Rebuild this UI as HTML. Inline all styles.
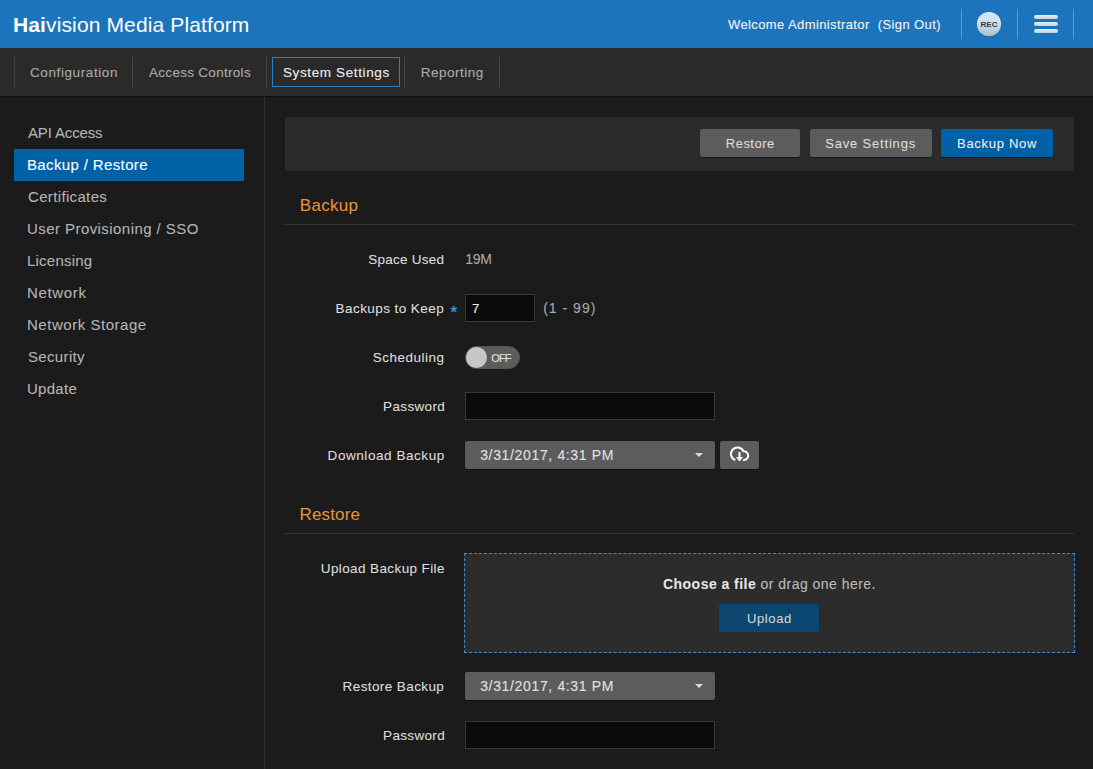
<!DOCTYPE html>
<html><head><meta charset="utf-8"><style>
*{box-sizing:border-box;margin:0;padding:0}
html,body{width:1093px;height:769px;overflow:hidden;background:#1b1b1b;font-family:"Liberation Sans",sans-serif;}
.t{position:absolute;white-space:nowrap;line-height:normal}
.box{position:absolute}
#hdr{left:0;top:0;width:1093px;height:48px;background:#1c75bc}
.vsep{position:absolute;width:1px;background:#5a9bd0;top:9px;height:30px}
#nav{left:0;top:48px;width:1093px;height:48px;background:#2a2a2a;box-shadow:0 1px 1px rgba(0,0,0,.45)}
.nsep{position:absolute;top:57px;height:30px;width:1px;background:#444}
#sysbox{left:272px;top:57px;width:128px;height:30px;border:1px solid #2a7fc9}
#side{left:264px;top:97px;width:1px;height:672px;background:#333}
#act{left:14px;top:149px;width:230px;height:32px;background:#0061a7}
#tool{left:285px;top:117px;width:789px;height:54px;background:#2b2b2b}
.btn{position:absolute;top:129px;height:28px;background:#5c5c5c;border-radius:2px;box-shadow:0 1px 1px rgba(0,0,0,.4)}
.hl{position:absolute;left:285px;width:789px;height:1px;background:#333}
.inp{position:absolute;left:465px;background:#0b0b0b;border:1px solid #3a3a3a}
.sel{position:absolute;left:465px;width:250px;height:28px;background:#5c5c5c;border-radius:2px;box-shadow:0 1px 1px rgba(0,0,0,.4)}
.caret{position:absolute;left:695px;width:0;height:0;border-left:4px solid transparent;border-right:4px solid transparent;border-top:4px solid #ddd}
#rec{left:977px;top:12px;width:24px;height:24px;border-radius:50%;background:linear-gradient(#d8e6f2 0%,#d0dfec 45%,#aebdca 100%);box-shadow:inset 0 0 1px rgba(255,255,255,.6)}
.hb{position:absolute;left:1034px;width:23.5px;height:4px;border-radius:2px;background:linear-gradient(#e8f0f7,#c2d2df)}
#tog{left:465px;top:346px;width:55px;height:23px;border-radius:12px;background:#5c5c5c;border:1px solid #555}
#knob{left:465.5px;top:347px;width:21px;height:21px;border-radius:50%;background:#c6c6c6}
#cbtn{left:720px;top:441px;width:39px;height:28px;background:#5c5c5c;border-radius:2px;box-shadow:0 1px 1px rgba(0,0,0,.4)}
#up{left:464px;top:553px;width:611px;height:100px;background:#2c2c2c;border:1px dashed #3a8fd9}
#upbtn{left:719px;top:604px;width:100px;height:28px;background:#0b4770;border-radius:2px}
</style></head><body>

<div id="hdr" class="box"></div>
<div class="vsep" style="left:961px"></div>
<div class="vsep" style="left:1017px"></div>
<div class="vsep" style="left:1073px"></div>
<div id="rec" class="box"></div>
<div class="hb" style="top:15px"></div>
<div class="hb" style="top:22px"></div>
<div class="hb" style="top:29px"></div>
<div id="nav" class="box"></div>
<div class="nsep" style="left:14px"></div>
<div class="nsep" style="left:132px"></div>
<div class="nsep" style="left:266px"></div>
<div class="nsep" style="left:404px"></div>
<div class="nsep" style="left:499px"></div>
<div id="sysbox" class="box"></div>
<div id="side" class="box"></div>
<div id="act" class="box"></div>
<div id="tool" class="box"></div>
<div class="btn" style="left:700px;width:100px"></div>
<div class="btn" style="left:810px;width:122px"></div>
<div class="btn" style="left:941px;width:112px;background:#0061a7"></div>
<div class="hl" style="top:224px"></div>
<div class="inp" style="top:294px;width:70px;height:28px"></div>
<div id="tog" class="box"></div><div id="knob" class="box"></div>
<div class="inp" style="top:392px;width:250px;height:28px"></div>
<div class="sel" style="top:441px"></div><i class="caret" style="top:453px"></i>
<div id="cbtn" class="box"><svg width="39" height="28" viewBox="0 0 39 28"><path d="M15.28 19.11 A6.5 6.5 0 1 1 23.37 10.22 A4.4 4.4 0 1 1 23.04 18.93" fill="none" stroke="#fff" stroke-width="2"/><path d="M19.5 11 V17" stroke="#fff" stroke-width="2"/><path d="M16 16 L23 16 L19.5 20.5 Z" fill="#fff"/></svg></div>
<div class="hl" style="top:533px"></div>
<div id="up" class="box"></div>
<div id="upbtn" class="box"></div>
<div class="sel" style="top:672px"></div><i class="caret" style="top:684px"></i>
<div class="inp" style="top:721px;width:250px;height:28px"></div>

<div id="logo" class="t" style="left:13px;top:13px;font-size:21px;letter-spacing:0.127px;color:#fff"><b>Hai</b>vision Media Platform</div>
<div id="welcome" class="t" style="left:728px;top:17px;font-size:13px;letter-spacing:0.394px;color:#f0f4f8;-webkit-text-stroke:0.1px #f0f4f8">Welcome Administrator&nbsp;&nbsp;(Sign Out)</div>
<div id="rectxt" class="t" style="left:977px;top:19.5px;font-size:8px;letter-spacing:0.1px;color:#333d47;font-weight:bold;width:24px;text-align:center">REC</div>
<div id="tab1" class="t" style="left:30px;top:65px;font-size:13.5px;letter-spacing:0.599px;color:#aaa;-webkit-text-stroke:0.1px #aaa">Configuration</div>
<div id="tab2" class="t" style="left:149px;top:65px;font-size:13.5px;letter-spacing:0.294px;color:#aaa;-webkit-text-stroke:0.1px #aaa">Access Controls</div>
<div id="tab3" class="t" style="left:283px;top:65px;font-size:13.5px;letter-spacing:0.619px;color:#eee;-webkit-text-stroke:0.1px #eee">System Settings</div>
<div id="tab4" class="t" style="left:420.7px;top:65px;font-size:13.5px;letter-spacing:0.5px;color:#aaa;-webkit-text-stroke:0.1px #aaa">Reporting</div>
<div id="side0" class="t" style="left:28px;top:124px;font-size:15px;letter-spacing:-0.144px;color:#b4b4b4;-webkit-text-stroke:0.1px #b4b4b4">API Access</div>
<div id="side1" class="t" style="left:27px;top:156px;font-size:15px;letter-spacing:0.367px;color:#fff;-webkit-text-stroke:0.1px #fff">Backup / Restore</div>
<div id="side2" class="t" style="left:28px;top:188px;font-size:15px;letter-spacing:0.345px;color:#b4b4b4;-webkit-text-stroke:0.1px #b4b4b4">Certificates</div>
<div id="side3" class="t" style="left:27px;top:220px;font-size:15px;letter-spacing:0.436px;color:#b4b4b4;-webkit-text-stroke:0.1px #b4b4b4">User Provisioning / SSO</div>
<div id="side4" class="t" style="left:27px;top:252px;font-size:15px;letter-spacing:0.217px;color:#b4b4b4;-webkit-text-stroke:0.1px #b4b4b4">Licensing</div>
<div id="side5" class="t" style="left:27px;top:284px;font-size:15px;letter-spacing:0.648px;color:#b4b4b4;-webkit-text-stroke:0.1px #b4b4b4">Network</div>
<div id="side6" class="t" style="left:27px;top:316px;font-size:15px;letter-spacing:0.53px;color:#b4b4b4;-webkit-text-stroke:0.1px #b4b4b4">Network Storage</div>
<div id="side7" class="t" style="left:28px;top:348px;font-size:15px;letter-spacing:0.342px;color:#b4b4b4;-webkit-text-stroke:0.1px #b4b4b4">Security</div>
<div id="side8" class="t" style="left:27px;top:380px;font-size:15px;letter-spacing:0.28px;color:#b4b4b4;-webkit-text-stroke:0.1px #b4b4b4">Update</div>
<div id="btn1" class="t" style="left:725.8px;top:136px;font-size:13px;letter-spacing:0.482px;color:#ddd;-webkit-text-stroke:0.1px #ddd">Restore</div>
<div id="btn2" class="t" style="left:825.2px;top:136px;font-size:13px;letter-spacing:0.817px;color:#ddd;-webkit-text-stroke:0.1px #ddd">Save Settings</div>
<div id="btn3" class="t" style="left:957px;top:136px;font-size:13px;letter-spacing:0.712px;color:#eee;-webkit-text-stroke:0.1px #eee">Backup Now</div>
<div id="hd1" class="t" style="left:299.8px;top:196px;font-size:17px;letter-spacing:0.28px;color:#e9943a">Backup</div>
<div id="hd2" class="t" style="left:299.6px;top:505px;font-size:17px;letter-spacing:0.133px;color:#e9943a">Restore</div>
<div id="lb1" class="t" style="left:368.3px;top:252px;font-size:13.5px;letter-spacing:0.234px;color:#ddd;-webkit-text-stroke:0.1px #ddd">Space Used</div>
<div id="v1" class="t" style="left:465.3px;top:251px;font-size:14px;letter-spacing:-0.3px;color:#aaa;-webkit-text-stroke:0.1px #aaa">19M</div>
<div id="lb2" class="t" style="left:335.6px;top:301px;font-size:13.5px;letter-spacing:0.427px;color:#ddd;-webkit-text-stroke:0.1px #ddd">Backups to Keep</div>
<div id="ast" class="t" style="left:450.6px;top:303px;font-size:17px;letter-spacing:0px;color:#3a8fd9;font-weight:bold">*</div>
<div id="v2" class="t" style="left:472px;top:301px;font-size:13px;letter-spacing:0.6px;color:#eee;-webkit-text-stroke:0.1px #eee">7</div>
<div id="v3" class="t" style="left:543.2px;top:300px;font-size:14px;letter-spacing:1.003px;color:#aaa;-webkit-text-stroke:0.1px #aaa">(1 - 99)</div>
<div id="lb3" class="t" style="left:372.8px;top:350px;font-size:13.5px;letter-spacing:0.499px;color:#ddd;-webkit-text-stroke:0.1px #ddd">Scheduling</div>
<div id="off" class="t" style="left:491.3px;top:352px;font-size:11px;letter-spacing:-0.9px;color:#e0e0e0;-webkit-text-stroke:0.1px #e0e0e0">OFF</div>
<div id="lb4" class="t" style="left:383.1px;top:399px;font-size:13.5px;letter-spacing:0.341px;color:#ddd;-webkit-text-stroke:0.1px #ddd">Password</div>
<div id="lb5" class="t" style="left:327.6px;top:448px;font-size:13.5px;letter-spacing:0.557px;color:#ddd;-webkit-text-stroke:0.1px #ddd">Download Backup</div>
<div id="sel1" class="t" style="left:480.2px;top:447px;font-size:14px;letter-spacing:0.649px;color:#e0e0e0;-webkit-text-stroke:0.1px #e0e0e0">3/31/2017, 4:31 PM</div>
<div id="lb6" class="t" style="left:320.8px;top:561px;font-size:13.5px;letter-spacing:0.39px;color:#ddd;-webkit-text-stroke:0.1px #ddd">Upload Backup File</div>
<div id="choose" class="t" style="left:663px;top:576px;font-size:14px;letter-spacing:0.467px;color:#bbb;-webkit-text-stroke:0.1px #bbb"><b style="color:#e8e8e8">Choose a file</b> or drag one here.</div>
<div id="upl" class="t" style="left:747px;top:611px;font-size:13px;letter-spacing:0.62px;color:#cdd2d6;-webkit-text-stroke:0.1px #cdd2d6">Upload</div>
<div id="lb7" class="t" style="left:342.6px;top:679px;font-size:13.5px;letter-spacing:0.4px;color:#ddd;-webkit-text-stroke:0.1px #ddd">Restore Backup</div>
<div id="sel2" class="t" style="left:480.2px;top:678px;font-size:14px;letter-spacing:0.649px;color:#e0e0e0;-webkit-text-stroke:0.1px #e0e0e0">3/31/2017, 4:31 PM</div>
<div id="lb8" class="t" style="left:383.1px;top:728px;font-size:13.5px;letter-spacing:0.328px;color:#ddd;-webkit-text-stroke:0.1px #ddd">Password</div>
</body></html>
